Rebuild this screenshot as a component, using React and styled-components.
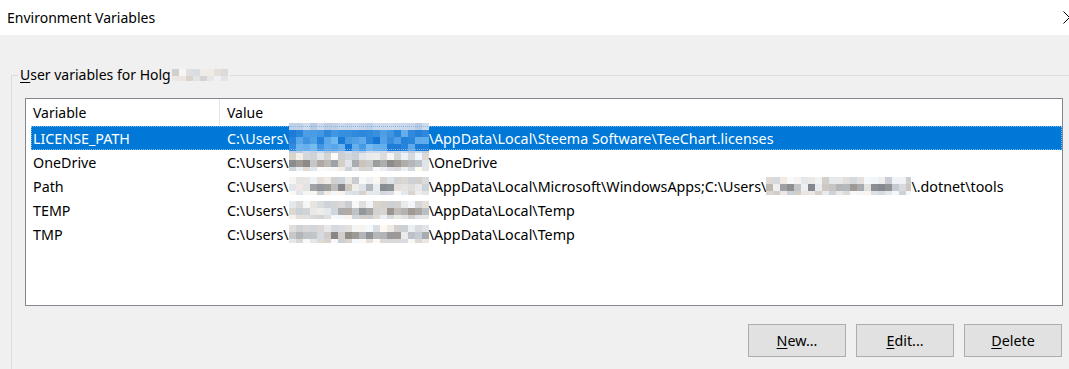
import React from 'react';
import styled, { createGlobalStyle } from 'styled-components';

const GlobalStyle = createGlobalStyle`
  html, body {
    margin: 0;
    padding: 0;
    background: #f0f0f0;
    overflow: hidden;
  }
  body {
    font-family: "Noto Sans", "Open Sans", sans-serif;
    font-size: 14px;
    color: #000;
  }
`;

const Window = styled.div`
  width: 1069px;
  height: 369px;
  overflow: hidden;
  background: #f0f0f0;
  display: flex;
  flex-direction: column;
`;

const TitleBar = styled.div`
  height: 35px;
  flex: none;
  background: #fff;
  display: flex;
  align-items: center;
  justify-content: space-between;
  padding-left: 7px;
  font-size: 14px;
  color: #000;
`;

const CloseGlyph = styled.svg`
  width: 13px;
  height: 13px;
  margin-right: -7px;
  margin-top: -1px;
`;

const Body = styled.div`
  flex: 1;
  padding: 30px 0 0 11px;
`;

const GroupBox = styled.fieldset`
  margin: 0 -40px 0 0;
  padding: 0 0 40px 0;
  border: 1px solid #dcdcdc;
  min-width: 0;
`;

const Legend = styled.legend`
  margin-left: 6px;
  padding: 0 2px;
  line-height: 20px;
  display: flex;
  align-items: center;
  gap: 1px;
`;

const Key = styled.span`
  text-decoration: underline;
  text-underline-offset: 2px;
`;

const ListBox = styled.div`
  margin: 13px 0 0 13px;
  width: 1036px;
  height: 206px;
  border: 1px solid #828790;
  background: #fff;
  display: flex;
  flex-direction: column;
`;

const Header = styled.div`
  height: 26px;
  display: flex;
  flex: none;
`;

const HeaderCell = styled.div`
  width: ${(p) => (p.$width ? `${p.$width}px` : 'auto')};
  flex: ${(p) => (p.$width ? 'none' : '1')};
  padding: 2px 0 0 7px;
  box-sizing: border-box;
  line-height: 24px;
  border-right: ${(p) => (p.$sep ? '1px solid #e5e5e5' : 'none')};
`;

const Rows = styled.div`
  padding: 1px 0 0 5px;
  font-size: 14.3px;
`;

const Row = styled.div`
  height: 24px;
  display: flex;
  align-items: center;
  white-space: nowrap;
  background: ${(p) => (p.$selected ? '#0078d7' : 'transparent')};
  color: ${(p) => (p.$selected ? '#fff' : '#000')};
  outline: ${(p) => (p.$selected ? '1px dotted #7fb6e8' : 'none')};
  outline-offset: -1px;
`;

const NameCell = styled.div`
  width: 194px;
  flex: none;
  padding-left: 2px;
`;

const ValueCell = styled.div`
  flex: 1;
  display: flex;
  align-items: center;
  overflow: visible;
`;

const Buttons = styled.div`
  display: flex;
  justify-content: flex-end;
  gap: 10px;
  width: 1050px;
  margin-top: 18px;
`;

const Button = styled.button`
  width: 98px;
  height: 33px;
  background: #e1e1e1;
  border: 1px solid #adadad;
  font-family: inherit;
  font-size: 14.3px;
  color: #000;
  padding: 0;
`;

const PixelBox = styled.svg`
  display: block;
  flex: none;
  margin: ${(p) => p.$margin || '0'};
`;

function Pixelate({ width, height = 18, cell = 6, seed = 1, selected = false, margin }) {
  const cols = Math.ceil(width / cell);
  const rows = Math.ceil(height / cell);
  let s = seed * 7919;
  const rnd = () => {
    s = (s * 9301 + 49297) % 233280;
    return s / 233280;
  };
  const rects = [];
  for (let r = 0; r < rows; r++) {
    for (let c = 0; c < cols; c++) {
      let fill;
      const edge = r === 0 || r === rows - 1;
      if (selected) {
        const v = rnd();
        if (edge) {
          fill = `rgb(${Math.round(180 + v * 30)},${Math.round(200 + v * 20)},${Math.round(225 + v * 12)})`;
        } else {
          fill = `rgb(${Math.round(20 + v * 100)},${Math.round(118 + v * 70)},${Math.round(212 + v * 30)})`;
        }
      } else {
        const v = rnd();
        const l = edge ? 205 + v * 45 : 135 + v * 105;
        const t = rnd() * 14 - 7;
        fill = `rgb(${Math.round(l + t)},${Math.round(l)},${Math.round(l - t)})`;
      }
      rects.push(
        <rect key={`${r}-${c}`} x={c * cell} y={r * cell} width={cell} height={cell} fill={fill} />
      );
    }
  }
  return (
    <PixelBox width={width} height={height} viewBox={`0 0 ${width} ${height}`} $margin={margin}>
      {rects}
    </PixelBox>
  );
}

const rows = [
  { name: 'LICENSE_PATH', rest: '\\AppData\\Local\\Steema Software\\TeeChart.licenses', selected: true },
  { name: 'OneDrive', rest: '\\OneDrive' },
  { name: 'Path', rest: '\\AppData\\Local\\Microsoft\\WindowsApps;C:\\Users\\', tail: '\\.dotnet\\tools' },
  { name: 'TEMP', rest: '\\AppData\\Local\\Temp' },
  { name: 'TMP', rest: '\\AppData\\Local\\Temp' },
];

export default function App() {
  return (
    <Window>
      <GlobalStyle />
      <TitleBar>
        <span>Environment Variables</span>
        <CloseGlyph viewBox="0 0 13 13">
          <path d="M0.5 0.5 L12.5 12.5 M12.5 0.5 L0.5 12.5" stroke="#000" strokeWidth="1" fill="none" />
        </CloseGlyph>
      </TitleBar>
      <Body>
        <GroupBox>
          <Legend>
            <span>
              <Key>U</Key>ser variables for Holg
            </span>
            <Pixelate width={56} height={12} cell={7} seed={42} />
          </Legend>
          <ListBox>
            <Header>
              <HeaderCell $width={194} $sep>Variable</HeaderCell>
              <HeaderCell>Value</HeaderCell>
            </Header>
            <Rows>
              {rows.map((row, i) => (
                <Row key={row.name} $selected={row.selected}>
                  <NameCell>{row.name}</NameCell>
                  <ValueCell>
                    <span>C:\Users\</span>
                    {row.selected ? (
                      <Pixelate width={140} height={30} cell={7} seed={i + 3} selected margin="-3px 0" />
                    ) : (
                      <Pixelate width={140} height={18} cell={7} seed={i + 3} />
                    )}
                    <span>{row.rest}</span>
                    {row.tail && (
                      <>
                        <Pixelate width={145} height={18} cell={7} seed={11} />
                        <span>{row.tail}</span>
                      </>
                    )}
                  </ValueCell>
                </Row>
              ))}
            </Rows>
          </ListBox>
          <Buttons>
            <Button><Key>N</Key>ew...</Button>
            <Button><Key>E</Key>dit...</Button>
            <Button><Key>D</Key>elete</Button>
          </Buttons>
        </GroupBox>
      </Body>
    </Window>
  );
}
